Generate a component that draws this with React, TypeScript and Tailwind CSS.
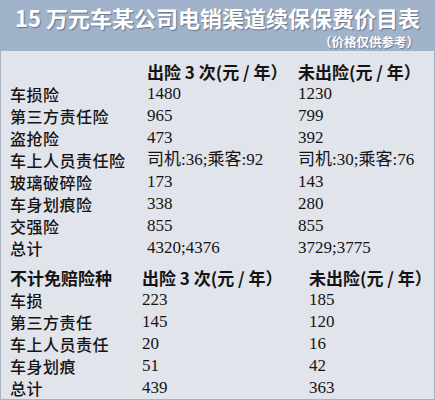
const mainRows: [string, string, string][] = [
  ["车损险", "1480", "1230"],
  ["第三方责任险", "965", "799"],
  ["盗抢险", "473", "392"],
  ["车上人员责任险", "司机:36;乘客:92", "司机:30;乘客:76"],
  ["玻璃破碎险", "173", "143"],
  ["车身划痕险", "338", "280"],
  ["交强险", "855", "855"],
  ["总计", "4320;4376", "3729;3775"],
];

const extraRows: [string, string, string][] = [
  ["车损", "223", "185"],
  ["第三方责任", "145", "120"],
  ["车上人员责任", "20", "16"],
  ["车身划痕", "51", "42"],
  ["总计", "439", "363"],
];

const labelFont = "[font-family:'Noto_Sans_CJK_SC',sans-serif]";

const App = () => {
  return (
    <div className="w-[435px] h-[400px] bg-[#e1e4eb] text-[#141414] overflow-hidden [font-family:'Noto_Sans_CJK_SC',sans-serif]">
      {/* Title bar */}
      <div className="h-[51px] bg-[#a1b3ca] pl-[15px] pt-[5px]">
        <div className="h-[24px] leading-[24px] text-[22px] font-bold text-white whitespace-nowrap [text-shadow:1px_1px_1px_rgba(70,85,110,0.7)]">
          15 万元车某公司电销渠道续保保费价目表
        </div>
        <div className="mt-[6px] pr-[16px] text-right leading-[14px] text-[12.5px] font-bold text-white [text-shadow:1px_1px_1px_rgba(70,85,110,0.6)]">
          （价格仅供参考）
        </div>
      </div>

      {/* Body */}
      <div className="h-[349px] border-x border-b border-[#a9b1be] pl-[9px] pt-[10px]">
        <div className="grid grid-cols-[137px_151px_1fr]">
          <div className="h-[22px]" />
          <div className="h-[22px] flex items-center text-[17px] font-bold whitespace-nowrap">出险 3 次(元 / 年）</div>
          <div className="h-[22px] flex items-center text-[17px] font-bold whitespace-nowrap">未出险(元 / 年）</div>
          {mainRows.map(([label, a, b]) => (
            <div key={label} className="contents">
              <div className={`h-[22px] flex items-center text-[16px] font-medium tracking-[0.5px] whitespace-nowrap ${labelFont}`}>{label}</div>
              <div className="h-[22px] flex items-center text-[17px] whitespace-nowrap [font-family:'Liberation_Serif','Noto_Sans_CJK_SC',serif]">{a}</div>
              <div className="h-[22px] flex items-center text-[17px] whitespace-nowrap [font-family:'Liberation_Serif','Noto_Sans_CJK_SC',serif]">{b}</div>
            </div>
          ))}
        </div>

        <div className="mt-[7px] grid grid-cols-[132px_167px_1fr]">
          <div className="h-[23px] flex items-center text-[17px] font-bold whitespace-nowrap">不计免赔险种</div>
          <div className="h-[23px] flex items-center text-[17px] font-bold whitespace-nowrap">出险 3 次(元 / 年）</div>
          <div className="h-[23px] flex items-center text-[17px] font-bold whitespace-nowrap">未出险(元 / 年）</div>
          {extraRows.map(([label, a, b]) => (
            <div key={label + a} className="contents">
              <div className={`h-[22px] flex items-center text-[16px] font-medium tracking-[0.5px] whitespace-nowrap ${labelFont}`}>{label}</div>
              <div className="h-[22px] flex items-center text-[17px] whitespace-nowrap [font-family:'Liberation_Serif',serif]">{a}</div>
              <div className="h-[22px] flex items-center text-[17px] whitespace-nowrap [font-family:'Liberation_Serif',serif]">{b}</div>
            </div>
          ))}
        </div>
      </div>
    </div>
  );
};

export default App;
